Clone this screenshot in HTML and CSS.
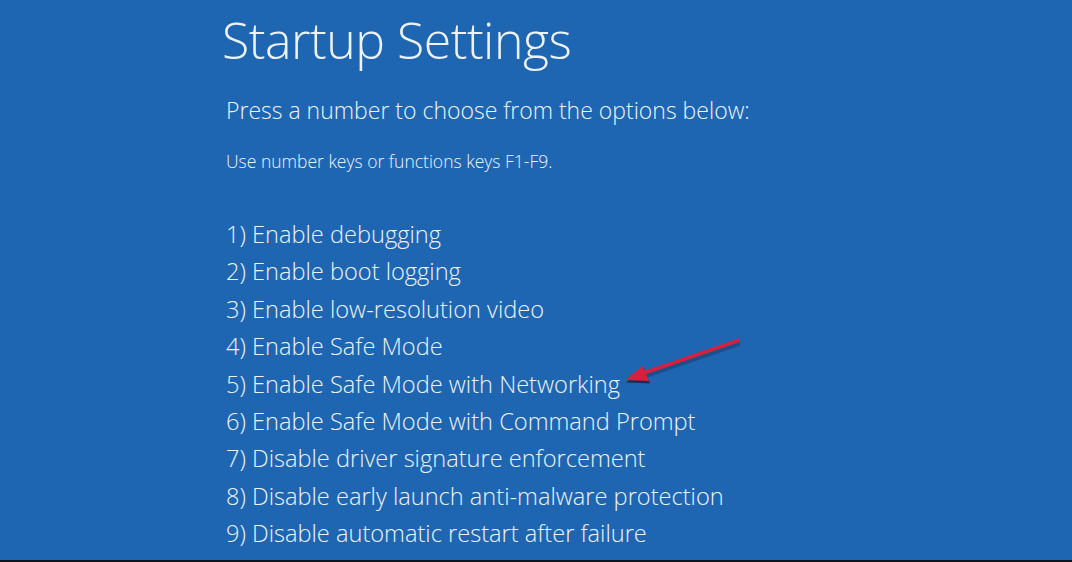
FILE: index.html
```html
<!DOCTYPE html>
<html>
<head>
    <title>Startup Settings</title>
    <meta charset="UTF-8">
    <link rel="stylesheet" href="styles.css">
</head>
<body>
    <div class="screen">
        <h1>Startup Settings</h1>
        <p class="lead">Press a number to choose from the options below:</p>
        <p class="hint">Use number keys or functions keys F1-F9.</p>
        <ol class="options">
            <li>1) Enable debugging</li>
            <li>2) Enable boot logging</li>
            <li>3) Enable low-resolution video</li>
            <li>4) Enable Safe Mode</li>
            <li>5) Enable Safe Mode with Networking</li>
            <li>6) Enable Safe Mode with Command Prompt</li>
            <li>7) Disable driver signature enforcement</li>
            <li>8) Disable early launch anti-malware protection</li>
            <li>9) Disable automatic restart after failure</li>
        </ol>
        <svg class="arrow" width="140" height="60" viewBox="600 330 140 60">
            <line x1="741" y1="341" x2="636" y2="377" stroke="#1a2a44" stroke-width="4" opacity="0.35" transform="translate(1,2)"/>
            <polygon points="626,381 644,366 650,382" fill="#0e1a33" opacity="0.7" transform="translate(0,1.5)"/>
            <line x1="740" y1="340" x2="638" y2="375" stroke="#d8203e" stroke-width="3.5" stroke-linecap="round"/>
            <polygon points="625,380 643,366 649,381" fill="#d8203e"/>
        </svg>
    </div>
</body>
</html>
```

FILE: styles.css
```css
body {
  margin: 0;
  background-color: #1f66b2;
  font-family: "Open Sans", "Noto Sans", sans-serif;
  color: #eef3f9;
}

.screen {
  position: relative;
  height: 560px;
  border-bottom: 2px solid #10141c;
  padding-left: 222px;
  overflow: hidden;
}

h1 {
  margin: 0;
  padding-top: 7px;
  font-size: 50px;
  font-weight: 300;
  line-height: 66px;
  letter-spacing: -0.5px;
}

.lead {
  margin: 22px 0 0 4px;
  font-size: 23px;
  font-weight: 300;
  line-height: 30px;
}

.hint {
  margin: 26px 0 0 4px;
  font-size: 17.5px;
  font-weight: 300;
  line-height: 20px;
}

.options {
  list-style: none;
  margin: 45px 0 0 4px;
  padding: 0;
}

.options li {
  font-size: 23.6px;
  font-weight: 300;
  line-height: 37.4px;
}

.arrow {
  position: absolute;
  left: 600px;
  top: 330px;
}
```
